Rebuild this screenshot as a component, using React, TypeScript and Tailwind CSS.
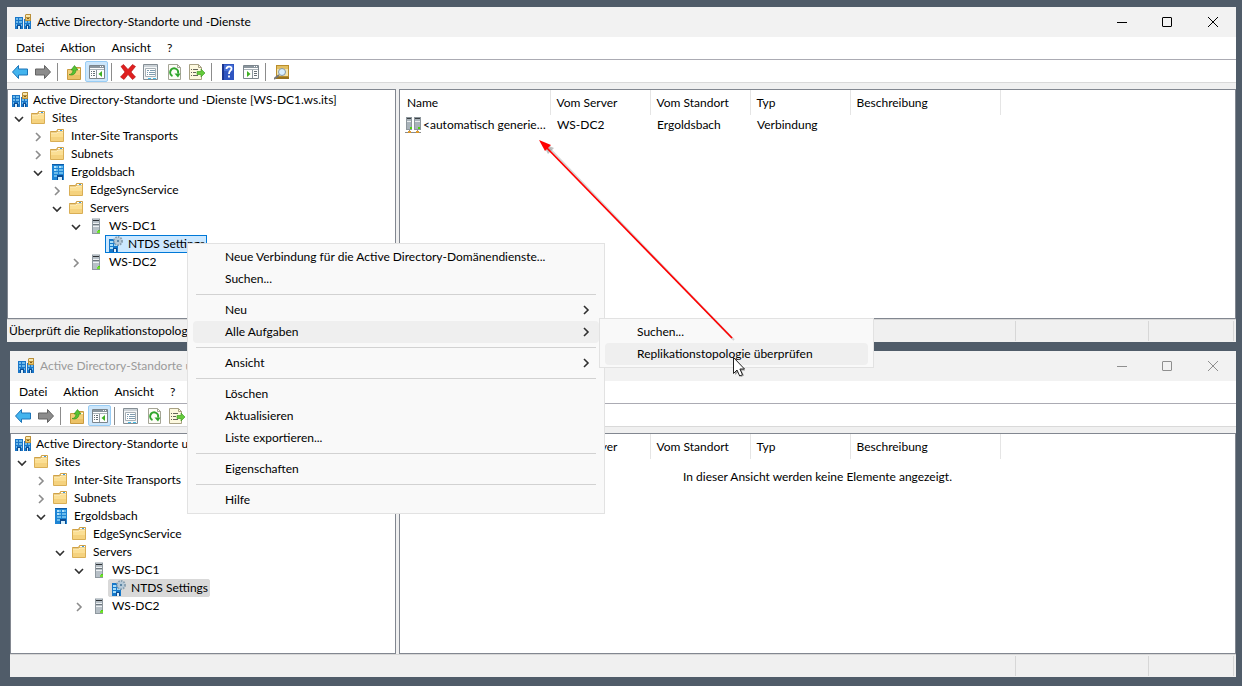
import { Fragment, ReactNode } from "react";
import clsx from "clsx";

type IconName =
  | "console"
  | "folder"
  | "site"
  | "server"
  | "ntds"
  | "connection"
  | "back"
  | "forward"
  | "up"
  | "tree"
  | "delete"
  | "properties"
  | "refresh"
  | "export"
  | "help"
  | "action"
  | "find";

type TreeNode = {
  label: string;
  icon: IconName;
  depth: number;
  state?: "open" | "closed";
  selected?: boolean;
};

const icons: Record<IconName, ReactNode> = {
  console: (
    <>
      <path d="M0 3h8v12H0z" fill="#1a76c8" />
      <path d="M1 4h2v2H1zM4 4h3v2H4zM1 7h2v2H1zM4 7h3v2H4zM1 10h1v2H1zM6 10h1v2H6z" fill="#6db9ea" />
      <path d="M2 11h4v4H2z" fill="#0b4c93" />
      <path d="M3 12h2v3H3z" fill="#d8effb" />
      <path d="M9 5h7v10H9z" fill="#1a76c8" />
      <path d="M10 7h2v2h-2zM13 7h2v2h-2zM10 10h1v2h-1zM14 10h1v2h-1z" fill="#6db9ea" />
      <path d="M11 11h3v4h-3z" fill="#0b4c93" />
      <path d="M12 12h1v3h-1z" fill="#d8effb" />
      <path d="M10 1l1-1h5v7h-6z" fill="#b98f3a" />
      <path d="M11 1h4v2h-4z" fill="#f8e7ae" />
      <path d="M11 4h4v2h-4z" fill="#e8c66e" />
      <path d="M12 4h2v1h-2z" fill="#806020" />
    </>
  ),
  folder: (
    <>
      <path d="M.5 3.500h6l1-2h6v3H.5z" fill="#e8bf61" stroke="#cfa146" />
      <path d="M8 2h5v1H8z" fill="#fff" />
      <path d="M10 2h2v1h-2z" fill="#3d9be0" />
      <path d="M.5 4.500h6l1-1h6v10H.5z" fill="#fbdf94" stroke="#d9ae55" />
      <path d="M1 9h12v4H1z" fill="#f5d27e" />
      <path d="M1 5h6l1-1h5" fill="none" stroke="#fff0c2" />
    </>
  ),
  site: (
    <>
      <path d="M2 0h12v16H2z" fill="#1d84d4" />
      <path d="M2 0h12v1H2z" fill="#0d5ca8" />
      <path
        d="M4 2h4v2H4zM9 2h4v2H9zM4 5h4v2H4zM9 5h4v2H9zM4 8h4v2H4zM9 8h4v2H9zM4 11h3v2H4z"
        fill="#6bbcec"
      />
      <path d="M4 2h2v2H4zM9 2h2v2H9zM4 5h2v2H4z" fill="#b3e2fb" />
      <path d="M7 11h6v5H7z" fill="#0b4c93" />
      <path d="M8 13h4v3H8z" fill="#d5effc" />
    </>
  ),
  server: (
    <>
      <path d="M4 0h8v16H4z" fill="#8f989f" />
      <path d="M5 1h6v14H5z" fill="#b7c0c7" />
      <path d="M4 0h8v1H4z" fill="#c7cdd1" />
      <path d="M5 2h6v1H5z" fill="#2f3336" />
      <path d="M5 5h6v1H5zM5 8h6v1H5z" fill="#eef1f3" />
      <path d="M5 6h6v1H5z" fill="#70797f" />
      <path d="M10 12h2v3h-2z" fill="#4fd10f" />
      <path d="M9 13h3v2H9z" fill="#6fe02f" />
    </>
  ),
  ntds: (
    <>
      <path d="M2 3h9v13H2z" fill="#1678c9" />
      <path d="M3 5h3v2H3zM3 8h3v2H3zM7 8h3v2H7zM3 11h3v2H3z" fill="#a5ddfa" />
      <path d="M6 12h4v4H6z" fill="#0b4c93" />
      <path d="M7 13h2v3H7z" fill="#e2f4ff" />
      <circle cx="11" cy="5" r="4" fill="#c2d3e0" stroke="#8aa0b1" strokeWidth="2" strokeDasharray="1.600 1" />
      <circle cx="11" cy="5" r="3" fill="#b5c9d8" />
      <circle cx="11" cy="5" r="1" fill="#416f94" />
    </>
  ),
  connection: (
    <>
      <path d="M1 0h6v13H1zM9 0h7v13H9z" fill="#8d969c" />
      <path d="M2 1h4v11H2zM10 1h5v11h-5z" fill="#a9b3ba" />
      <path d="M2 1.500h4M10 1.500h5" stroke="#3c4246" />
      <path d="M2 4.500h4M10 4.500h5" stroke="#e8ebed" />
      <path d="M5 10h2v2H5zM13 10h2v2h-2z" fill="#4fd10f" />
      <path d="M0 15.500h16M4.500 13v2M12.500 13v2" stroke="#8a8a8a" />
      <path d="M3 14h3v2H3zM11 14h3v2h-3z" fill="#e09a2b" />
    </>
  ),
  back: (
    <path
      d="M.5 8L6.500 1.500v3.500h9v6h-9v3.500z"
      fill="#43b4ee"
      stroke="#1c74b8"
      strokeLinejoin="round"
    />
  ),
  forward: (
    <path
      d="M15.500 8L9.500 1.500v3.500h-9v6h9v3.500z"
      fill="#8c8c8c"
      stroke="#636363"
      strokeLinejoin="round"
    />
  ),
  up: (
    <>
      <path d="M1.500 5.500h6l1-2h6v12h-13z" fill="#f3cf79" stroke="#c99b40" />
      <path d="M9 5h5v1H9z" fill="#fff" />
      <path d="M2 11h12v4H2z" fill="#ecc266" />
      <path d="M3 10.500c2 0 4-1.500 4-4.500H5l3.500-4.500L12 6h-2c0 4-3.500 6-7 4.500z" fill="#57c234" stroke="#2e8a16" strokeWidth=".6" />
    </>
  ),
  tree: (
    <>
      <path d="M.5 1.500h15v13H.5z" fill="#fdfdfd" stroke="#7b858c" />
      <path d="M1 2h14v2H1z" fill="#8b969e" />
      <path d="M11 2.500h1M13 2.500h1" stroke="#fff" />
      <path d="M1 5.500h14" stroke="#aab3b9" />
      <path d="M7.500 6v8" stroke="#8b969e" />
      <path d="M2 7.500h1M4 7.500h2M2 9.500h1M4 9.500h2M2 11.500h1M4 11.500h2" stroke="#667077" />
      <path d="M13 7v6L9.500 10z" fill="#3db022" />
    </>
  ),
  delete: (
    <path
      d="M1 2.500L3.500.5 8 5.500 12.500.5l3 2L11 8l4.500 5-3 2.500L8 10.500l-4 5L.5 13 5 8z"
      fill="#e02020"
      stroke="#b00d0d"
      strokeWidth=".6"
    />
  ),
  properties: (
    <>
      <path d="M.5.5h14v15H.5z" fill="#f4f6f7" stroke="#858e94" />
      <path d="M1 1h13v2H1z" fill="#cbd2d7" />
      <path d="M2.500 4.500h10v8h-10z" fill="#fff" stroke="#a7b0b6" />
      <path d="M4 6.500h2M7 6.500h5M4 8.500h1M6 8.500h6M4 10.500h1M6 10.500h6" stroke="#7e9cb0" />
      <path d="M5 14h3v1H5zM10 14h3v1h-3z" fill="#45bde8" />
    </>
  ),
  refresh: (
    <>
      <path d="M2.500.5h9l3 3v12h-12z" fill="#fdfdf6" stroke="#a5a596" />
      <path d="M11.500.5v3h3" fill="none" stroke="#a5a596" />
      <path d="M6.500 12A4 4 0 1 1 12 9.500" fill="none" stroke="#2fa52b" strokeWidth="2" />
      <path d="M8.500 9.500h6L12 13.500z" fill="#2fa52b" />
    </>
  ),
  export: (
    <>
      <path d="M.5.5h9l3 3v12H.5z" fill="#fdf9df" stroke="#a8a184" />
      <path d="M9.500.5v3h3" fill="none" stroke="#a8a184" />
      <path d="M2 5.500h1M4 5.500h5M2 8.500h1M4 8.500h3M2 11.500h1M4 11.500h5" stroke="#66665a" />
      <path d="M8 7.500h4v-2.500l4 4-4 4v-2.500H8z" fill="#64cb3b" stroke="#36951b" strokeWidth=".6" />
    </>
  ),
  help: (
    <>
      <path d="M2 0h12v16H2z" fill="#2f55c0" />
      <path d="M2 0h2v16H2z" fill="#1b3691" />
      <path d="M4 1h9v6H4z" fill="#466fd7" />
      <path
        d="M6.500 5c0-3 5-3 5-.5C11.500 7 9 6.500 9 10M9 11.500v2"
        fill="none"
        stroke="#fff"
        strokeWidth="1.800"
      />
    </>
  ),
  action: (
    <>
      <path d="M.5 1.500h15v13H.5z" fill="#fdfdfd" stroke="#7b858c" />
      <path d="M1 2h14v2H1z" fill="#8b969e" />
      <path d="M11 2.500h1M13 2.500h1" stroke="#fff" />
      <path d="M1 5.500h14" stroke="#aab3b9" />
      <path d="M9.500 6v8" stroke="#8b969e" />
      <path d="M11 7.500h3M11 9.500h3M11 11.500h3" stroke="#667077" />
      <path d="M4 7v6l3.500-3z" fill="#3db022" />
    </>
  ),
  find: (
    <>
      <path d="M2 1h13v14H2z" fill="#b98d2b" />
      <path d="M3 2h11v3H3z" fill="#e2bf62" />
      <path d="M3 5h11v7H3z" fill="#f4e3ab" />
      <path d="M2 13h13v2H2z" fill="#99731d" />
      <path d="M0 15l5-4" stroke="#777" strokeWidth="2" />
      <circle cx="8" cy="8" r="3.500" fill="#d9efff" stroke="#8497a5" />
    </>
  ),
};

const Icon = ({ name }: { name: IconName }) => (
  <svg viewBox="0 0 16 16" className="size-4 shrink-0" aria-hidden="true">
    {icons[name]}
  </svg>
);

const Chevron = ({ className }: { className?: string }) => (
  <svg
    viewBox="0 0 10 10"
    className={clsx("size-[10px] shrink-0 fill-none", className)}
    strokeWidth="1.600"
    aria-hidden="true"
  >
    <path d="M3 1l4 4-4 4" />
  </svg>
);

const menus = ["Datei", "Aktion", "Ansicht", "?"];

const buildTree = (server: string, active: boolean): TreeNode[] => [
  {
    label: `Active Directory-Standorte und -Dienste [${server}.ws.its]`,
    icon: "console",
    depth: 0,
  },
  { label: "Sites", icon: "folder", depth: 1, state: "open" },
  { label: "Inter-Site Transports", icon: "folder", depth: 2, state: "closed" },
  { label: "Subnets", icon: "folder", depth: 2, state: "closed" },
  { label: "Ergoldsbach", icon: "site", depth: 2, state: "open" },
  {
    label: "EdgeSyncService",
    icon: "folder",
    depth: 3,
    state: active ? "closed" : undefined,
  },
  { label: "Servers", icon: "folder", depth: 3, state: "open" },
  { label: "WS-DC1", icon: "server", depth: 4, state: "open" },
  { label: "NTDS Settings", icon: "ntds", depth: 5, selected: true },
  { label: "WS-DC2", icon: "server", depth: 4, state: "closed" },
];

const columns = ["Name", "Vom Server", "Vom Standort", "Typ", "Beschreibung"];

const toolbar: { name: IconName; label: string }[][] = [
  [
    { name: "back", label: "Zurück" },
    { name: "forward", label: "Vorwärts" },
  ],
  [
    { name: "up", label: "Eine Ebene nach oben" },
    { name: "tree", label: "Konsolenstruktur" },
  ],
  [
    { name: "delete", label: "Löschen" },
    { name: "properties", label: "Eigenschaften" },
    { name: "refresh", label: "Aktualisieren" },
    { name: "export", label: "Liste exportieren" },
  ],
  [
    { name: "help", label: "Hilfe" },
    { name: "action", label: "Aktionsbereich" },
  ],
  [{ name: "find", label: "Suchen" }],
];

const TitleBar = ({ active }: { active: boolean }) => (
  <header className="flex h-[30px] shrink-0 items-center bg-[#f2f2f2] pl-2">
    <Icon name="console" />
    <h2
      className={clsx(
        "ml-[6px] flex-1 truncate",
        active ? "text-black" : "text-[#9a9a9a]"
      )}
    >
      Active Directory-Standorte und -Dienste
    </h2>
    <div
      className={clsx(
        "flex h-full",
        active ? "stroke-black" : "stroke-[#8f8f8f]"
      )}
    >
      <button aria-label="Minimieren" className="grid w-[45px] place-items-center">
        <svg viewBox="0 0 10 10" className="size-[10px]">
          <path d="M0 5.500h10" />
        </svg>
      </button>
      <button aria-label="Maximieren" className="grid w-[46px] place-items-center">
        <svg viewBox="0 0 10 10" className="size-[10px] fill-none">
          <rect x=".5" y=".5" width="9" height="9" rx=".5" />
        </svg>
      </button>
      <button aria-label="Schließen" className="grid w-[46px] place-items-center">
        <svg viewBox="0 0 10 10" className="size-[10px]">
          <path d="M0 0l10 10M10 0L0 10" />
        </svg>
      </button>
    </div>
  </header>
);

const Toolbar = ({ active }: { active: boolean }) => (
  <div className="flex h-[23px] shrink-0 items-end border-b border-[#d9d9d9] bg-white pl-px">
    {toolbar.map((group, i) => (
      <Fragment key={i}>
        {i > 0 && (
          <div className="flex h-[19px] w-2 pb-px pl-[3px]">
            <div className="w-px bg-[#8c8c8c]" />
          </div>
        )}
        {group
          .filter((item) => active || item.name !== "delete")
          .map((item) => (
            <button
              key={item.name}
              aria-label={item.label}
              className={clsx(
                "flex h-[21px] w-[23px] items-end justify-center rounded-xs border pb-px",
                item.name === "tree"
                  ? "border-[#99cdf5] bg-[#cce6fb]"
                  : "border-transparent"
              )}
            >
              <Icon name={item.name} />
            </button>
          ))}
      </Fragment>
    ))}
  </div>
);

const Tree = ({ nodes, active }: { nodes: TreeNode[]; active: boolean }) => (
  <ul role="tree" className="pt-px pl-[2px]">
    {nodes.map((node) => (
      <li
        key={node.label}
        role="treeitem"
        aria-selected={!!node.selected}
        className="flex h-[18px] items-center"
      >
        {Array.from({ length: Math.max(node.depth - 1, 0) }, (_, i) => (
          <span key={i} className="w-[19px] shrink-0" />
        ))}
        {node.depth > 0 && (
          <span className="flex w-[19px] shrink-0 pt-[2px] pl-1">
            {node.state && (
              <Chevron
                className={
                  node.state === "open"
                    ? "rotate-90 stroke-[#303030]"
                    : "stroke-[#8c8c8c]"
                }
              />
            )}
          </span>
        )}
        <span
          className={clsx(
            "flex h-[18px] items-center gap-[5px] border pr-px pl-px whitespace-nowrap",
            !node.selected && "border-transparent",
            node.selected && active && "border-[#0078d7] bg-[#cce8ff]",
            node.selected && !active && "rounded-xs border-[#d9d9d9] bg-[#d9d9d9]"
          )}
        >
          <Icon name={node.icon} />
          {node.label}
        </span>
      </li>
    ))}
  </ul>
);

const ListView = ({ rows }: { rows: string[][] }) => (
  <>
    <table className="w-full table-fixed text-left">
      <colgroup>
        <col className="w-[150px]" />
        <col className="w-[100px]" />
        <col className="w-[100px]" />
        <col className="w-[100px]" />
        <col className="w-[150px]" />
        <col />
      </colgroup>
      <thead>
        <tr className="h-[25px]">
          {columns.map((column) => (
            <th
              key={column}
              className="border-r border-[#e5e5e5] pl-[6px] font-normal first:pl-[7px]"
            >
              {column}
            </th>
          ))}
          <th />
        </tr>
      </thead>
      <tbody>
        {rows.map((row) => (
          <tr key={row[0]} className="h-5">
            {row.map((cell, i) => (
              <td key={i} className={i === 0 ? "pr-[2px] pl-[5px]" : "truncate pl-[7px]"}>
                {i === 0 ? (
                  <div className="flex items-center gap-[2px]">
                    <Icon name="connection" />
                    <span className="truncate">{cell}</span>
                  </div>
                ) : (
                  cell
                )}
              </td>
            ))}
          </tr>
        ))}
      </tbody>
    </table>
    {rows.length === 0 && (
      <p className="pt-[10px] text-center">
        In dieser Ansicht werden keine Elemente angezeigt.
      </p>
    )}
  </>
);

type ConsoleWindowProps = {
  server: string;
  active?: boolean;
  rows: string[][];
  status?: string;
  className?: string;
};

const ConsoleWindow = ({
  server,
  active = false,
  rows,
  status,
  className,
}: ConsoleWindowProps) => (
  <section className={clsx("flex min-w-0 flex-col bg-[#f0f0f0]", className)}>
    <TitleBar active={active} />
    <nav className="flex h-[23px] shrink-0 items-center gap-4 border-b border-[#ababb3] bg-white pl-[9px]">
      {menus.map((menu) => (
        <button key={menu}>{menu}</button>
      ))}
    </nav>
    <Toolbar active={active} />
    <div className="flex flex-1 gap-[3px] pt-[6px]">
      <div
        className={clsx(
          "shrink-0 overflow-hidden border border-[#828790] bg-white",
          active ? "w-[389px]" : "w-[386px]"
        )}
      >
        <Tree nodes={buildTree(server, active)} active={active} />
      </div>
      <div className="min-w-0 flex-1 border border-[#828790] bg-white">
        <ListView rows={rows} />
      </div>
    </div>
    <footer className="flex h-[23px] shrink-0 items-center border-t border-[#d7d7d7]">
      <span className="flex-1 truncate pl-[2px]">{status}</span>
      <span className="h-5 w-[134px] border-x border-[#d7d7d7]" />
      <span className="mr-[2px] h-5 w-[85px] border-r border-[#d7d7d7]" />
    </footer>
  </section>
);

type MenuEntry = { label: string; submenu?: boolean; highlighted?: boolean };

const contextMenu: MenuEntry[][] = [
  [
    { label: "Neue Verbindung für die Active Directory-Domänendienste..." },
    { label: "Suchen..." },
  ],
  [
    { label: "Neu", submenu: true },
    { label: "Alle Aufgaben", submenu: true, highlighted: true },
  ],
  [{ label: "Ansicht", submenu: true }],
  [
    { label: "Löschen" },
    { label: "Aktualisieren" },
    { label: "Liste exportieren..." },
  ],
  [{ label: "Eigenschaften" }],
  [{ label: "Hilfe" }],
];

const taskMenu: MenuEntry[][] = [
  [
    { label: "Suchen..." },
    { label: "Replikationstopologie überprüfen", highlighted: true },
  ],
];

const PopupMenu = ({
  groups,
  className,
}: {
  groups: MenuEntry[][];
  className: string;
}) => (
  <div
    role="menu"
    className={clsx(
      "absolute border border-[#e2e2e2] bg-[#f9f9f9] px-[5px] py-[2px]",
      className
    )}
  >
    {groups.map((group, i) => (
      <Fragment key={i}>
        {i > 0 && <hr className="mx-[3px] my-1 border-[#d2d2d2]" />}
        {group.map((entry) => (
          <button
            key={entry.label}
            role="menuitem"
            className={clsx(
              "flex h-[22px] w-full items-center justify-between rounded-sm pr-2 pl-8 whitespace-nowrap",
              entry.highlighted && "bg-[#efefef]"
            )}
          >
            {entry.label}
            {entry.submenu && <Chevron className="stroke-[#303030]" />}
          </button>
        ))}
      </Fragment>
    ))}
  </div>
);

export default function App() {
  return (
    <main className="relative grid min-h-screen grid-rows-[335fr_326fr] gap-[9px] bg-[#505c69] pt-[7px] pr-[6px] pb-[9px] pl-[7px] font-['Lato','Liberation_Sans',sans-serif] text-[12px] leading-4 text-black">
      <ConsoleWindow
        server="WS-DC1"
        active
        rows={[["<automatisch generiert>", "WS-DC2", "Ergoldsbach", "Verbindung"]]}
        status="Überprüft die Replikationstopologie"
      />
      <ConsoleWindow server="WS-DC2" className="ml-[3px]" rows={[]} />

      <PopupMenu groups={contextMenu} className="top-[243px] left-[187px] w-[418px]" />
      <PopupMenu groups={taskMenu} className="top-[318px] left-[599px] w-[275px]" />

      {/* arrow from the menu entry up to the generated connection */}
      <svg
        viewBox="0 0 210 245"
        className="pointer-events-none absolute top-[135px] left-[535px] h-[245px] w-[210px]"
        aria-hidden="true"
      >
        <path d="M14 13l185 192" stroke="#999" strokeOpacity=".4" strokeWidth="2" />
        <path d="M7 8l12 5-6 6z" fill="#999" fillOpacity=".6" />
        <path d="M10 11l187 192" stroke="#f00" strokeWidth="1.700" />
        <path d="M4 5l12 5-6 6z" fill="#f00" />
        <path
          d="M200 225v15l3.500-3 2.500 5 3-1.500-2.500-5h4z"
          fill="#000"
          fillOpacity=".35"
        />
        <path
          d="M198.500 222.500v16l3.500-3.500 2.700 6 2.800-1.300-2.600-5.700h4.600z"
          fill="#fff"
          stroke="#222"
        />
      </svg>
    </main>
  );
}
